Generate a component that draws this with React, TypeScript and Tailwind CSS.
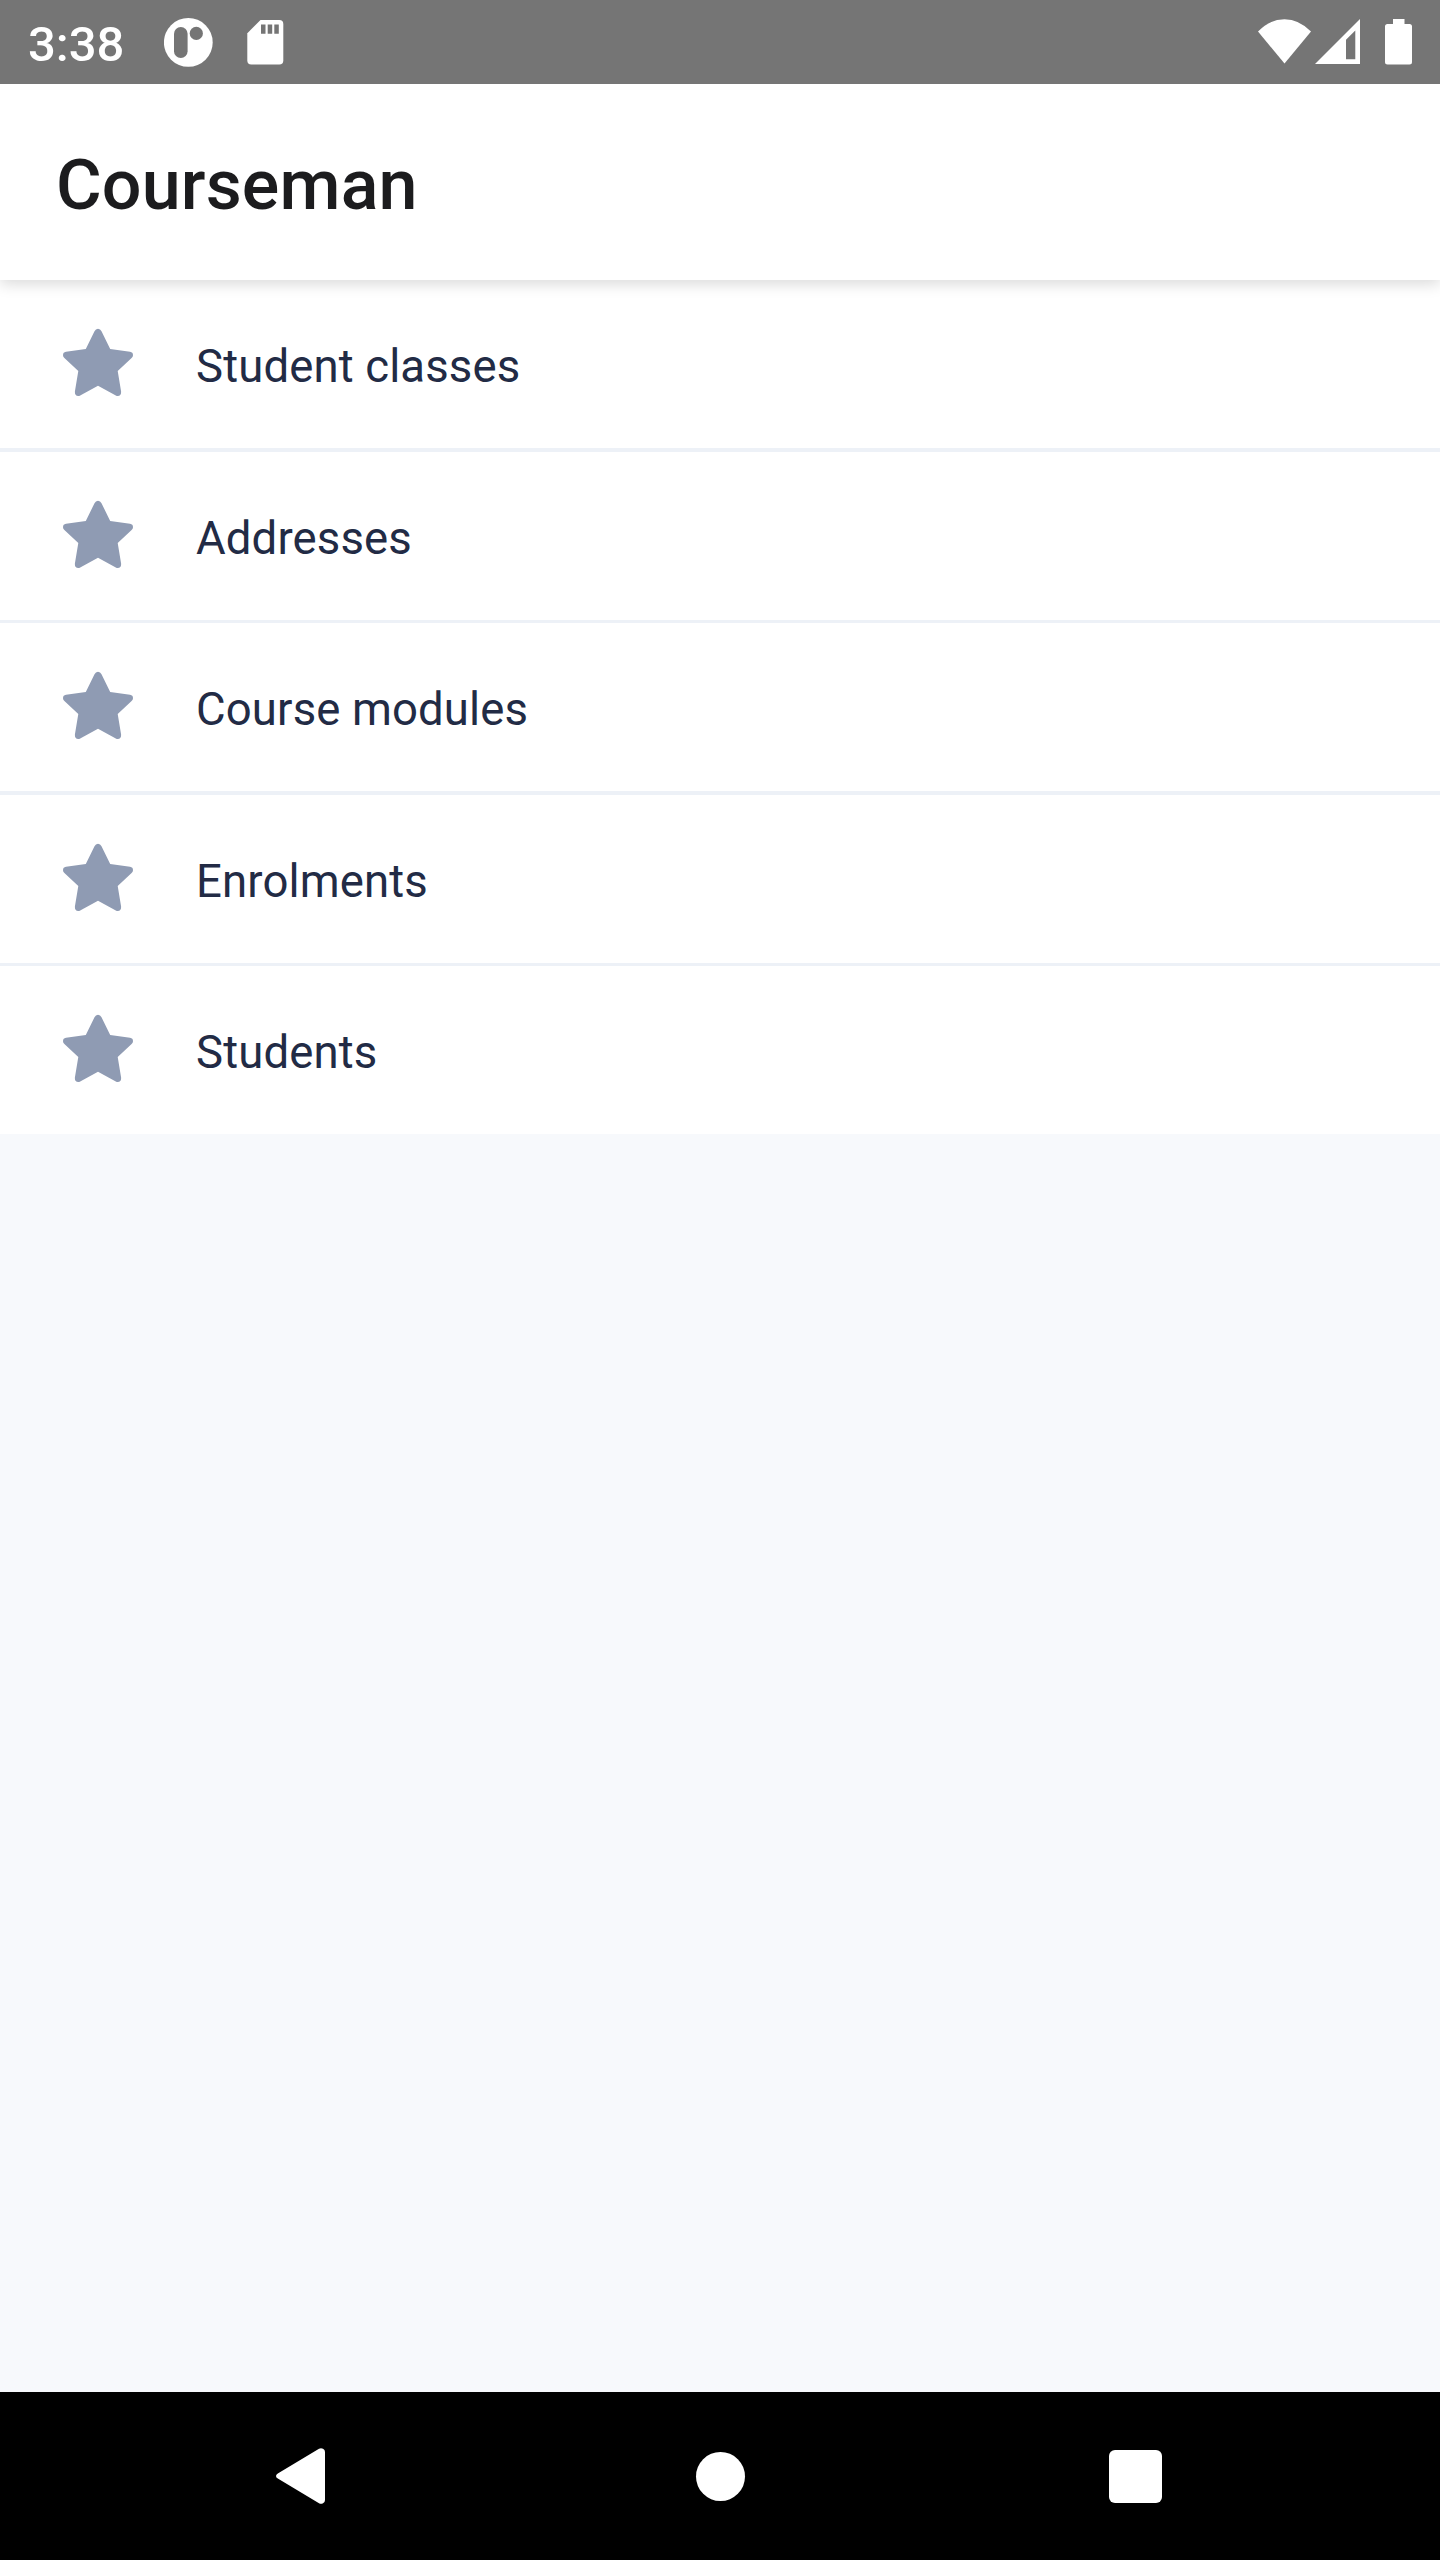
const items = [
  { title: 'Student classes', row: 'h-[172px] border-b-4' },
  { title: 'Addresses', row: 'h-[171px] border-b-3' },
  { title: 'Course modules', row: 'h-[172px] border-b-4' },
  { title: 'Enrolments', row: 'h-[171px] border-b-3' },
  { title: 'Students', row: 'h-[168px]' },
];

function StarIcon() {
  return (
    <svg className="size-[84px] shrink-0 fill-[#8f9bb3]" viewBox="0 0 84 84">
      <path d="M38.5 9.2Q39.7 6.7 42 6.7T45.5 9.2L54.2 27L74 29.8Q77 30.3 77 33.2Q77 34.6 75.6 36L61.7 49L65.1 69.6Q65.4 74 61.7 74Q60.8 74 59.8 73.4L42 63.8L24.2 73.4Q23.2 74 22.3 74Q18.6 74 18.9 69.6L22.3 49L8.4 36Q7 34.6 7 33.2Q7 30.3 10 29.8L29.8 27Z" />
    </svg>
  );
}

function StatusBar() {
  return (
    <div className="relative z-20 flex h-[84px] items-center justify-between bg-[#757575] text-white">
      <div className="flex h-full items-center">
        <span className="ml-7 w-[136px] pt-1 text-[49px] leading-none font-medium">3:38</span>
        <svg className="h-[84px] w-[49px]" viewBox="164 0 49 84">
          <circle cx="188.3" cy="42.4" r="24.4" fill="#fff" />
          <rect x="174" y="27" width="13.6" height="31" rx="6.8" fill="#757575" />
          <circle cx="196.3" cy="33.4" r="6.6" fill="#757575" />
        </svg>
        <svg className="ml-[34px] h-[84px] w-[37px]" viewBox="247 0 37 84">
          <path d="M260.5 20H279.300Q283.300 20 283.300 24V60.500Q283.300 64.500 279.300 64.500H251.300Q247.300 64.500 247.300 60.500V33.300Z" fill="#fff" />
          <path d="M261 24.500h4.500v9.200h-4.500zM267.700 24.500h4.500v9.200h-4.500zM274.300 24.500h4.500v9.200h-4.500z" fill="#757575" />
        </svg>
      </div>
      <svg className="mr-7 h-[84px] w-[156px]" viewBox="1256 0 156 84" fill="#fff">
        <path d="M1284.500 63.500L1258 31.500Q1270 19.200 1284.500 19.200T1311 31.500Z" />
        <path fillRule="evenodd" d="M1360 19V64H1315ZM1355.300 30.500L1346 39.700V59.300H1355.300Z" />
        <path d="M1393 19H1404.500V24H1409.500Q1412 24 1412 26.500V62Q1412 64.500 1409.500 64.500H1387.500Q1385 64.500 1385 62V26.500Q1385 24 1387.500 24H1393Z" />
      </svg>
    </div>
  );
}

function NavigationBar() {
  return (
    <div className="flex h-[168px] items-center justify-between bg-black pr-[278px] pl-[276px]">
      <svg className="h-[56px] w-[49px]" viewBox="0 0 49 56" fill="#fff">
        <path d="M43 .7Q45 -.3 47 .7Q49 1.700 49 4V52Q49 54.300 47 55.300Q45 56.300 43 55.300L1.800 30.600Q0 29.600 0 28T1.800 25.400Z" />
      </svg>
      <div className="ml-[6px] size-[49px] rounded-full bg-white" />
      <div className="size-[53px] rounded-[6px] bg-white" />
    </div>
  );
}

export default function App() {
  return (
    <div className="flex h-[2560px] w-[1440px] flex-col overflow-hidden bg-[#f7f9fc] font-[Roboto,sans-serif]">
      <StatusBar />
      <header className="relative z-10 flex h-[196px] items-center bg-white px-14 pt-1.5 shadow-[0_4px_14px_rgba(0,0,0,0.15)]">
        <h1 className="text-[70px] leading-none font-medium tracking-[0.15px] text-[#1c1c1e]">Courseman</h1>
      </header>
      <main className="flex-1">
        {items.map((item) => (
          <div key={item.title} className={`flex items-center border-[#edf1f7] bg-white px-14 ${item.row}`}>
            <StarIcon />
            <span className="ml-14 pt-1.5 text-[45.5px] leading-none tracking-[0.14px] text-[#222b45]">{item.title}</span>
          </div>
        ))}
      </main>
      <NavigationBar />
    </div>
  );
}
